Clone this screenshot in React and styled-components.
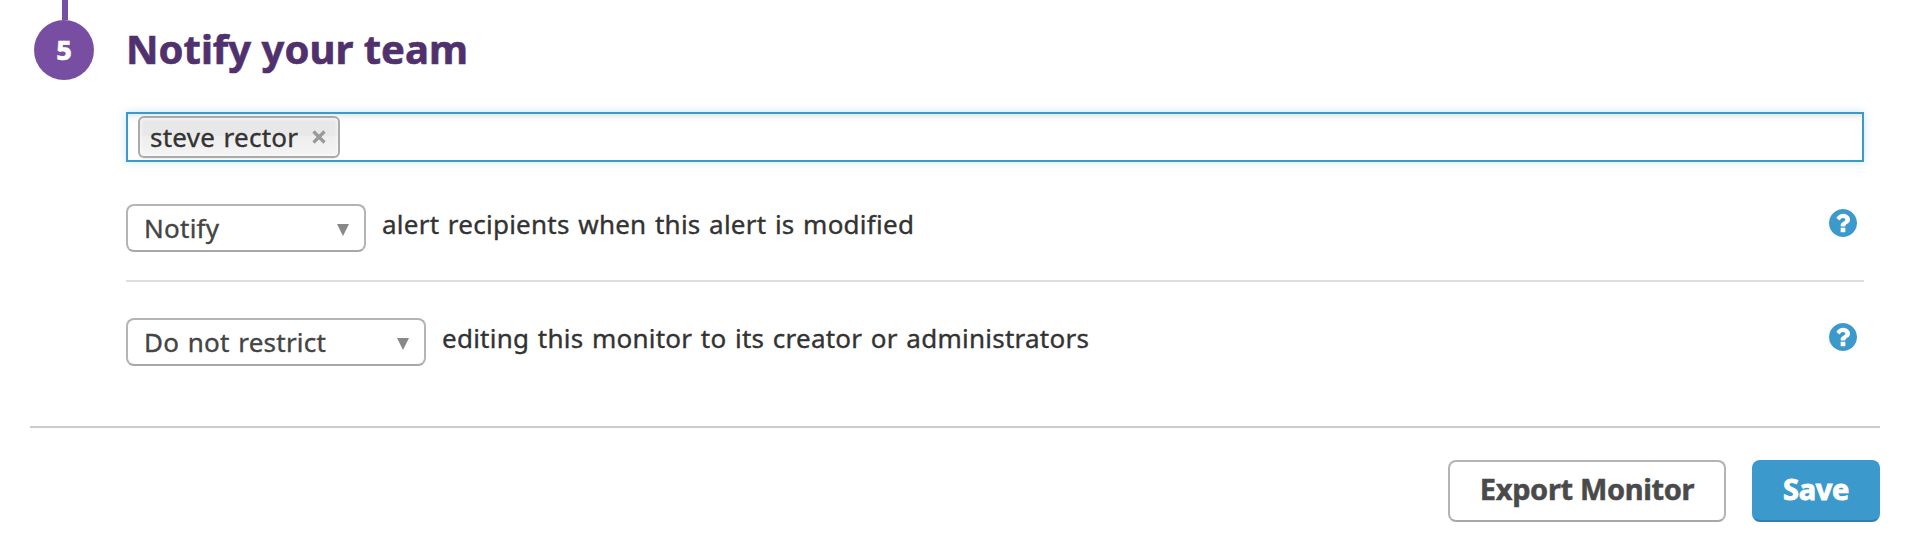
import React from "react";
import styled, { createGlobalStyle } from "styled-components";

const GlobalStyle = createGlobalStyle`
  * { box-sizing: border-box; }
  body {
    margin: 0;
    background: #fff;
    color: #333;
    font-family: "Noto Sans", "Open Sans", sans-serif;
    font-size: 26px;
  }
`;

const Page = styled.main`
  height: 558px;
  padding: 0 48px 0 30px;
  overflow: hidden;
`;

const Step = styled.section`
  display: flex;
  gap: 32px;
  height: 426px;
  padding: 0 16px 0 4px;
`;

const StepMarker = styled.div`
  display: flex;
  flex-direction: column;
  align-items: center;
  width: 60px;
`;

const Connector = styled.div`
  width: 6px;
  height: 20px;
  margin-left: 2px;
  background: #774ea2;
`;

const StepNumber = styled.div`
  width: 60px;
  height: 60px;
  border-radius: 50%;
  background: #774ea2;
  color: #fff;
  font-size: 27px;
  font-weight: 800;
  -webkit-text-stroke: 0.5px currentColor;
  line-height: 60px;
  text-align: center;
`;

const StepBody = styled.div`
  flex: 1;
`;

const Title = styled.h2`
  height: 112px;
  margin: 0;
  color: #50316d;
  font-size: 40px;
  font-weight: 700;
  -webkit-text-stroke: 0.6px currentColor;
  line-height: 98px;
`;

const RecipientField = styled.div`
  height: 50px;
  padding: 2px 10px;
  border: 2px solid #3b99cb;
  box-shadow: 0 0 8px rgba(59, 153, 203, 0.25), inset 0 6px 6px -4px rgba(0, 0, 0, 0.12);
`;

const Chip = styled.span`
  display: flex;
  align-items: center;
  justify-content: space-between;
  width: 202px;
  height: 42px;
  padding: 0 12px 0 10px;
  border: 2px solid #aaa;
  border-radius: 6px;
  background: linear-gradient(#e8e8e8 0%, #e8e8e8 45%, #eeeeee 50%, #f4f4f4 100%);
  box-shadow: inset 0 0 4px #fff, 0 1px 0 rgba(0, 0, 0, 0.05);
  line-height: 36px;
`;

const Label = styled.span`
  letter-spacing: 0.25px;
  word-spacing: 1.5px;
  -webkit-text-stroke: 0.35px currentColor;
  white-space: nowrap;
`;

const Option = styled.div`
  display: flex;
  height: ${(p) => p.$height}px;
  padding-top: ${(p) => p.$top}px;
  border-bottom: ${(p) => (p.$divided ? "2px solid #ddd" : "none")};
`;

const Select = styled.button`
  display: flex;
  align-items: center;
  justify-content: space-between;
  width: ${(p) => p.$width}px;
  height: 48px;
  margin-right: 16px;
  padding: 0 15px 0 16px;
  border: 2px solid #b4b4b4;
  border-bottom-color: #a8a8a8;
  border-radius: 8px;
  background: #fff;
  color: #444;
  font: inherit;
  line-height: 44px;
  svg { margin-top: 4px; }
`;

const OptionText = styled.div`
  flex: 1;
  height: 48px;
  line-height: 41px;
`;

const HelpButton = styled.span`
  width: 28px;
  height: 28px;
  margin: 5px 7px 0 0;
  color: #3b99cb;
  svg { display: block; }
`;

const Footer = styled.footer`
  display: flex;
  justify-content: flex-end;
  gap: 26px;
  padding-top: 32px;
  border-top: 2px solid #ccc;
`;

const Button = styled.button`
  width: ${(p) => p.$width}px;
  height: 62px;
  padding: 0 0 5px;
  border: 2px solid ${(p) => (p.$primary ? "#3b99cb" : "#b4b4b4")};
  border-bottom-color: ${(p) => (p.$primary ? "#2f7fac" : "#a8a8a8")};
  border-radius: 8px;
  background: ${(p) => (p.$primary ? "#3b99cb" : "#fff")};
  color: ${(p) => (p.$primary ? "#fff" : "#4a4a4a")};
  font-family: inherit;
  font-size: 29px;
  font-weight: 700;
  letter-spacing: -0.35px;
  -webkit-text-stroke: ${(p) => (p.$primary ? 0.9 : 0.5)}px currentColor;
`;

const HelpIcon = () => (
  <svg width="28" height="28" viewBox="0 128 1536 1536" fill="currentColor">
    <path d="M896 1376v-192q0-14-9-23t-23-9h-192q-14 0-23 9t-9 23v192q0 14 9 23t23 9h192q14 0 23-9t9-23zM1152 704q0-88-55.5-163t-138.5-116-170-41q-243 0-371 213-15 24 8 42l132 100q7 6 19 6 16 0 25-12 53-68 86-92 34-24 86-24 48 0 85.5 26t37.5 59q0 38-20 61t-68 45q-63 28-115.5 86.5t-52.5 125.5v36q0 14 9 23t23 9h192q14 0 23-9t9-23q0-19 21.5-49.5t54.5-49.5q32-18 49-28.5t46-35 44.5-48 28-60.5 12.5-81zM1536 896q0 209-103 385.5t-279.5 279.5-385.5 103-385.5-103-279.5-279.5-103-385.5 103-385.5 279.5-279.5 385.5-103 385.5 103 279.5 279.5 103 385.5z" />
  </svg>
);

const CloseIcon = () => (
  <svg width="14" height="14" viewBox="0 0 14 14" stroke="#999" strokeWidth="3.2">
    <path d="M1.5 1.5l11 11M12.5 1.5l-11 11" />
  </svg>
);

const Arrow = () => (
  <svg width="12" height="12" viewBox="0 0 12 12" fill="#888">
    <path d="M0 0h12L6 12z" />
  </svg>
);

export default function App() {
  return (
    <Page>
      <GlobalStyle />
      <Step>
        <StepMarker>
          <Connector />
          <StepNumber>5</StepNumber>
        </StepMarker>
        <StepBody>
          <Title>Notify your team</Title>
          <RecipientField>
            <Chip>
              <Label>steve rector</Label>
              <CloseIcon />
            </Chip>
          </RecipientField>
          <Option $height={120} $top={42} $divided>
            <Select $width={240}>
              <Label>Notify</Label>
              <Arrow />
            </Select>
            <OptionText>
              <Label>alert recipients when this alert is modified</Label>
            </OptionText>
            <HelpButton><HelpIcon /></HelpButton>
          </Option>
          <Option $height={120} $top={36}>
            <Select $width={300}>
              <Label>Do not restrict</Label>
              <Arrow />
            </Select>
            <OptionText>
              <Label>editing this monitor to its creator or administrators</Label>
            </OptionText>
            <HelpButton><HelpIcon /></HelpButton>
          </Option>
        </StepBody>
      </Step>
      <Footer>
        <Button $width={278}>Export Monitor</Button>
        <Button $width={128} $primary>Save</Button>
      </Footer>
    </Page>
  );
}
